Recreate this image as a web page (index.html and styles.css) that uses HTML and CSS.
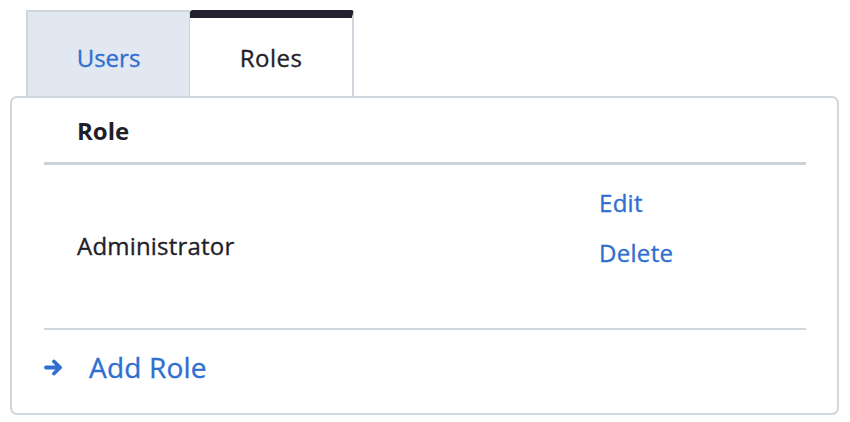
FILE: index.html
```html
<!DOCTYPE html>
<html>
<head>
<meta charset="utf-8">
<link rel="stylesheet" href="styles.css">
</head>
<body>
<div class="page">
  <div class="tabs">
    <div class="tab tab-inactive">Users</div>
    <div class="tab tab-active">Roles</div>
  </div>
  <div class="panel">
    <div class="row head">
      <div class="cell-name">Role</div>
      <div class="cell-actions"></div>
    </div>
    <div class="row body-row">
      <div class="cell-name name">Administrator</div>
      <div class="cell-actions actions">
        <a class="link">Edit</a>
        <a class="link">Delete</a>
      </div>
    </div>
    <div class="footer">
      <svg class="arrow" width="20" height="17" viewBox="0 0 20 17"><path d="M2 8.5 H16 M10 2.5 L16 8.5 L10 14.5" fill="none" stroke="#2f6fd0" stroke-width="3.8" stroke-linecap="round" stroke-linejoin="round"/></svg>
      <span class="add">Add Role</span>
    </div>
  </div>
</div>
</body>
</html>
```
FILE: styles.css
```css
html, body {
  margin: 0;
  padding: 0;
  background: #ffffff;
}
body {
  font-family: "Open Sans", "Noto Sans", sans-serif;
  color: #1f1f2b;
  -webkit-text-stroke: 0.35px currentColor;
}
.page {
  padding: 10px 11px 0 10px;
}
.tabs {
  display: flex;
  margin-left: 16px;
}
.tab {
  width: 164px;
  height: 86px;
  box-sizing: border-box;
  display: flex;
  align-items: center;
  justify-content: center;
  font-size: 24px;
  padding-top: 6px;
  border: 2px solid #cfd6de;
  border-bottom: none;
}
.tab-inactive {
  background: #e1e8f1;
  color: #2f6fd0;
  border-right: 1px solid #cfd6de;
}
.tab-active {
  background: #ffffff;
  border-top: 8px solid #22212f;
  border-left: none;
  border-radius: 3px 3px 0 0;
  color: #1f1f2b;
  padding-top: 0;
  letter-spacing: 0.5px;
}
.panel {
  border: 2px solid #cfd6de;
  border-radius: 7px;
  padding: 0 31px 0 32px;
  height: 319px;
  box-sizing: border-box;
}
.row {
  display: grid;
  grid-template-columns: 555px 1fr;
}
.cell-name {
  padding-left: 33px;
}
.head {
  height: 64px;
  align-items: center;
  border-bottom: 3px solid #cbd2da;
  font-weight: 700;
  font-size: 24px;
  -webkit-text-stroke: 0;
}
.body-row {
  height: 163px;
  border-bottom: 2px solid #cfd6de;
  align-items: center;
}
.name {
  font-size: 24px;
  letter-spacing: 0.2px;
  padding-bottom: 2px;
}
.actions {
  display: flex;
  flex-direction: column;
  gap: 17px;
  align-self: start;
  padding-top: 21px;
}
.link {
  color: #2f6fd0;
  font-size: 24px;
  line-height: 33px;
  letter-spacing: 0.3px;
}
.footer {
  display: flex;
  align-items: center;
  height: 80px;
  padding-bottom: 6px;
  box-sizing: border-box;
  gap: 25px;
}
.arrow {
  display: block;
}
.add {
  color: #2f6fd0;
  font-size: 28px;
  letter-spacing: 0.2px;
}
```
